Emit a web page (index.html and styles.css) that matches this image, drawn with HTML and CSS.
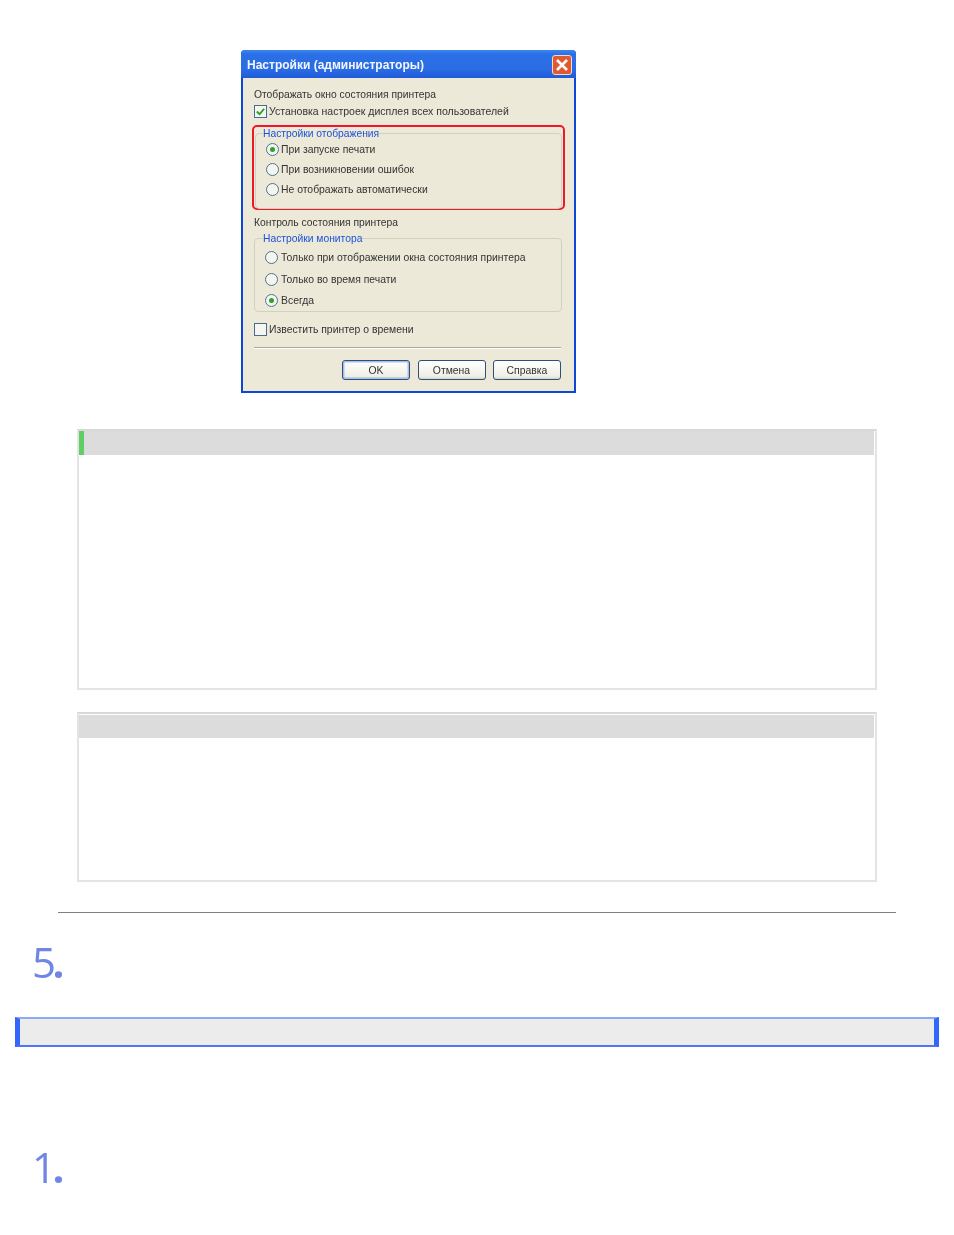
FILE: index.html
```html
<!DOCTYPE html>
<html lang="ru">
<head>
<meta charset="utf-8">
<title>Настройки</title>
<link rel="stylesheet" href="styles.css">
</head>
<body>
<main class="page">
  <section class="dialog">
    <header class="titlebar">
      <span class="title">Настройки (администраторы)</span>
      <span class="close"><svg viewBox="0 0 20 20" width="20" height="20"><path d="M5 5l10 10M15 5L5 15" stroke="#fff" stroke-width="2.6" fill="none"/></svg></span>
    </header>
    <div class="content">
      <div class="label first">Отображать окно состояния принтера</div>
      <div class="row check-row first-check"><span class="box"><svg viewBox="0 0 12 12" width="11" height="11"><path d="M2 6l3 3 5-6" stroke="#21a121" stroke-width="2" fill="none"/></svg></span>Установка настроек дисплея всех пользователей</div>
      <div class="highlight">
        <fieldset class="group group-a">
          <legend>Настройки отображения</legend>
          <div class="row radio-row"><span class="radio on"></span>При запуске печати</div>
          <div class="row radio-row"><span class="radio"></span>При возникновении ошибок</div>
          <div class="row radio-row"><span class="radio"></span>Не отображать автоматически</div>
        </fieldset>
      </div>
      <div class="label second">Контроль состояния принтера</div>
      <fieldset class="group group-b">
        <legend>Настройки монитора</legend>
        <div class="row radio-row"><span class="radio"></span>Только при отображении окна состояния принтера</div>
        <div class="row radio-row"><span class="radio"></span>Только во время печати</div>
        <div class="row radio-row"><span class="radio on"></span>Всегда</div>
      </fieldset>
      <div class="row check-row notify"><span class="box"></span>Известить принтер о времени</div>
      <div class="rule"></div>
      <div class="buttons">
        <span class="btn default">OK</span>
        <span class="btn">Отмена</span>
        <span class="btn">Справка</span>
      </div>
    </div>
  </section>

  <section class="note note-tall"><div class="note-head accent"></div></section>
  <section class="note note-short"><div class="note-head"></div></section>

  <hr class="divider">
  <h2 class="num num-five">5<span class="dot">.</span></h2>
  <div class="banner"></div>
  <h2 class="num num-one">1<span class="dot">.</span></h2>
</main>
</body>
</html>
```

FILE: styles.css
```css
html, body {
  margin: 0;
  padding: 0;
  background: #fff;
}
.page {
  display: flex;
  flex-direction: column;
  height: 1235px;
  overflow: hidden;
  font-family: "Liberation Sans", Arial, sans-serif;
}

/* dialog screenshot */
.dialog {
  box-sizing: border-box;
  width: 335px;
  height: 343px;
  margin: 50px 0 0 241px;
  display: flex;
  flex-direction: column;
  background: #ece9d8;
  border: 2px solid #0c47d6;
  border-top: 0;
  border-radius: 4px 4px 0 0;
  filter: blur(0.7px);
  font-size: 10.4px;
  color: #333;
}
.titlebar {
  box-sizing: border-box;
  height: 28px;
  margin: 0 -2px;
  padding: 2px 4px 0 6px;
  display: flex;
  align-items: center;
  justify-content: space-between;
  background: linear-gradient(#3a86f0 0, #2b6fe6 15%, #2a6ce4 70%, #1f5cd8 100%);
  border-radius: 4px 4px 0 0;
}
.title {
  color: #f4f7ff;
  font-size: 12px;
  font-weight: bold;
}
.close {
  width: 20px;
  height: 20px;
  border: 1px solid #f3d9cf;
  border-radius: 3px;
  box-sizing: border-box;
  display: flex;
  align-items: center;
  justify-content: center;
  background: #df5a30;
}
.close svg { flex: none; }
.content {
  display: flex;
  flex-direction: column;
  padding: 0 12px 0 11px;
}
.label {
  line-height: 14px;
  font-size: 10.3px;
}
.label.first { margin-top: 10px; }
.label.second { margin-top: 6px; }
.row {
  display: flex;
  align-items: center;
  white-space: nowrap;
}
.check-row {
  height: 16px;
  margin-top: 2px;
  font-size: 10.5px;
}
.first-check { margin-top: 1px; }
.box {
  box-sizing: border-box;
  width: 13px;
  height: 13px;
  margin-right: 2px;
  border: 1px solid #4a6a8f;
  background: #f6f6f0;
  display: flex;
  align-items: center;
  justify-content: center;
  flex: none;
}
.highlight {
  box-sizing: border-box;
  height: 85px;
  margin: 6px -3px 0 -2px;
  padding: 0 1px;
  border: 2px solid #f01828;
  border-radius: 5px;
}
.group {
  margin: 0;
  padding: 0 0 0 10px;
  border: 1px solid #d2d0c0;
  border-radius: 4px;
  min-width: 0;
}
.group legend {
  margin-left: -3px;
  padding: 2px 0 0;
  color: #1c52d8;
  line-height: 12px;
  font-size: 10.3px;
}
.group-a { height: 81px; margin-top: -1px; }
.group-a .radio-row { height: 20px; }
.group-a .radio-row:first-of-type { margin-top: -1px; }
.group-b { height: 79px; margin-top: 1px; padding-left: 11px; }
.group-b .radio-row { height: 21.5px; margin-top: 0; }
.group-b .radio-row:first-of-type { margin-top: 2px; }
.group-b .radio { margin-left: -1px; margin-right: 3px; }
.radio {
  box-sizing: border-box;
  width: 13px;
  height: 13px;
  margin-right: 2px;
  border: 1px solid #4f7291;
  border-radius: 50%;
  background: #f5f5f0;
  display: flex;
  align-items: center;
  justify-content: center;
  flex: none;
}
.radio.on::after {
  content: "";
  width: 5px;
  height: 5px;
  border-radius: 50%;
  background: #2ea12e;
}
.notify { margin-top: 9px; font-size: 10.4px; }
.rule {
  height: 1px;
  margin-top: 10px;
  margin-right: 1px;
  background: #aca899;
  border-bottom: 1px solid #fff;
}
.buttons {
  display: flex;
  justify-content: flex-end;
  gap: 7.5px;
  margin-top: 11px;
  margin-right: 1px;
}
.btn {
  box-sizing: border-box;
  width: 68px;
  height: 20px;
  border: 1px solid #2d4f7d;
  border-radius: 3px;
  background: linear-gradient(#fff, #f0efe6 85%, #d8d4c4);
  display: flex;
  align-items: center;
  justify-content: center;
}
.btn.default { box-shadow: inset 0 0 0 1.5px #a8c0e8; }

/* empty note panels */
.note {
  box-sizing: border-box;
  width: 800px;
  margin-left: 77px;
  background: #fff;
  border: 2px solid #e4e4e4;
  border-top-color: #d8d8d8;
}
.note-tall { height: 261px; margin-top: 36px; }
.note-short { height: 170px; margin-top: 22px; }
.note-head {
  height: 24px;
  background: #dcdcdc;
  margin-right: 1px;
}
.note-short .note-head { height: 23px; margin-top: 1px; }
.note-head.accent {
  border-left: 5px solid #5fcf63;
}

.divider {
  width: 838px;
  height: 1px;
  margin: 30px 0 0 58px;
  border: 0;
  background: #808080;
}
.num {
  margin: 0 0 0 32px;
  font-family: "Open Sans", sans-serif;
  font-weight: 400;
  font-size: 42px;
  line-height: 58px;
  letter-spacing: -3.5px;
  color: #6f86e3;
  filter: blur(0.3px);
}
.dot {
  font-weight: 700;
}
.num-five { margin-top: 20px; }
.banner {
  box-sizing: border-box;
  width: 924px;
  height: 30px;
  margin: 26px 0 0 15px;
  background: #ececec;
  border-style: solid;
  border-width: 2px 5px;
  border-color: #8ea7f6 #3366ff #4f74f5 #3366ff;
}
.num-one { margin-top: 91px; }
```
